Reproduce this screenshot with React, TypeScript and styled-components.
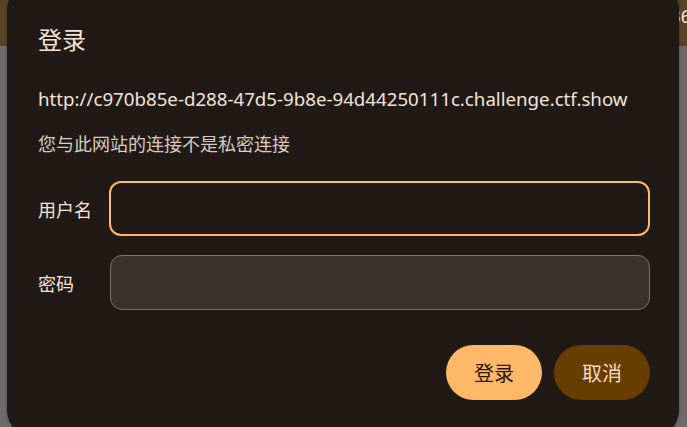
import { FC } from "react";
import styled, { createGlobalStyle } from "styled-components";

const colors = {
  page: "#6c6b6a",
  header: "#5a4426",
  dialog: "#211915",
  text: "#f3e4d6",
  muted: "#d9cbbf",
  accent: "#ffb868",
  accentText: "#2c1800",
  tonal: "#673d00",
  tonalText: "#f6dcc0",
  field: "#3b322e",
  fieldBorder: "#7e736c",
};

const GlobalStyle = createGlobalStyle`
  html, body {
    margin: 0;
    padding: 0;
    height: 100%;
    overflow: hidden;
    background: ${colors.page};
    font-family: "Microsoft YaHei", "Noto Sans", "Noto Sans CJK SC", sans-serif;
  }
  #root {
    height: 100%;
  }
`;

const Page = styled.div`
  position: relative;
  height: 100%;
`;

const TopBar = styled.header`
  height: 46px;
  background: ${colors.header};
  display: flex;
  justify-content: flex-end;
  align-items: flex-start;
  padding-top: 4px;
  box-sizing: border-box;
  overflow: hidden;
`;

const TopBarText = styled.span`
  color: ${colors.text};
  font-size: 18px;
  margin-right: -4px;
`;

const Dialog = styled.div`
  position: absolute;
  left: 7px;
  top: -18px;
  width: 672px;
  height: 456px;
  box-sizing: border-box;
  padding: 40px 29px 0 31px;
  background: ${colors.dialog};
  border-radius: 28px;
  box-shadow: 0 0 3px rgba(0, 0, 0, 0.35);
  display: flex;
  flex-direction: column;
`;

const Title = styled.h2`
  margin: 0;
  font-size: 24px;
  font-weight: 400;
  line-height: 36px;
  color: ${colors.text};
`;

const Address = styled.p`
  margin: 29px 0 0;
  font-size: 18.7px;
  line-height: 24px;
  white-space: nowrap;
  color: ${colors.text};
`;

const Notice = styled.p`
  margin: 21px 0 0;
  font-size: 18px;
  line-height: 24px;
  color: ${colors.muted};
`;

const Form = styled.div`
  margin-top: 25px;
  display: flex;
  flex-direction: column;
  gap: 19px;
`;

const Row = styled.label`
  display: flex;
  align-items: center;
`;

const Label = styled.span`
  width: 71px;
  flex-shrink: 0;
  font-size: 18px;
  color: ${colors.text};
`;

const Field = styled.input<{ $focused?: boolean }>`
  flex: 1;
  height: 55px;
  box-sizing: border-box;
  border-radius: 12px;
  padding: 0 16px;
  font: inherit;
  font-size: 18px;
  color: ${colors.text};
  outline: none;
  background: ${({ $focused }) => ($focused ? colors.dialog : colors.field)};
  border: ${({ $focused }) =>
    $focused ? `2px solid ${colors.accent}` : `1px solid ${colors.fieldBorder}`};
  margin-left: ${({ $focused }) => ($focused ? "0" : "1px")};
`;

const Actions = styled.div`
  margin-top: 35px;
  display: flex;
  justify-content: flex-end;
  gap: 12px;
`;

const Button = styled.button<{ $primary?: boolean }>`
  width: 96px;
  height: 55px;
  border: none;
  border-radius: 28px;
  font: inherit;
  font-size: 20px;
  cursor: pointer;
  background: ${({ $primary }) => ($primary ? colors.accent : colors.tonal)};
  color: ${({ $primary }) => ($primary ? colors.accentText : colors.tonalText)};
`;

const App: FC = () => (
  <Page>
    <GlobalStyle />
    <TopBar>
      <TopBarText>36</TopBarText>
    </TopBar>
    <Dialog role="dialog">
      <Title>登录</Title>
      <Address>http://c970b85e-d288-47d5-9b8e-94d44250111c.challenge.ctf.show</Address>
      <Notice>您与此网站的连接不是私密连接</Notice>
      <Form>
        <Row>
          <Label>用户名</Label>
          <Field $focused autoFocus />
        </Row>
        <Row>
          <Label>密码</Label>
          <Field type="password" />
        </Row>
      </Form>
      <Actions>
        <Button $primary>登录</Button>
        <Button>取消</Button>
      </Actions>
    </Dialog>
  </Page>
);

export default App;
